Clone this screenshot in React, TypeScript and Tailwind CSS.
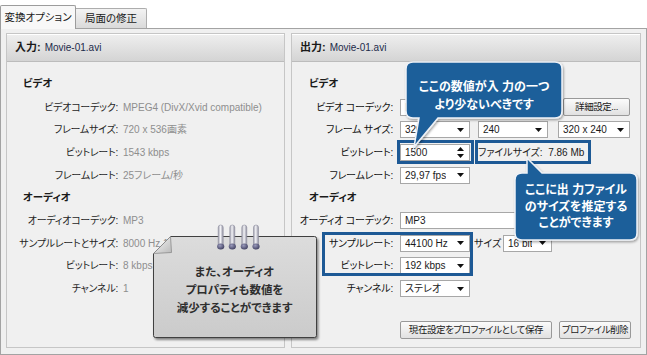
import React from "react";

const F = "font-['Liberation_Sans','Noto_Sans_CJK_JP',sans-serif] [font-feature-settings:'palt']";

function Arrow() {
  return (
    <svg width="7" height="4" viewBox="0 0 7 4" className="shrink-0">
      <path d="M0 0H7L3.5 4Z" fill="#111" />
    </svg>
  );
}

function Drop({ w, text }: { w: string; text: string }) {
  return (
    <div className={`${w} h-[17px] shrink-0 bg-white border border-[#a7a7a7] flex items-center justify-between pl-[4px] pr-[5px] text-[#1a1a1a]`}>
      <span className="whitespace-nowrap overflow-hidden">{text}</span>
      <Arrow />
    </div>
  );
}

function Spin({ text }: { text: string }) {
  return (
    <div className="w-[70px] h-[17px] shrink-0 bg-white border border-[#a7a7a7] flex items-center justify-between pl-[4px] pr-[5px]">
      <span>{text}</span>
      <svg width="7" height="11" viewBox="0 0 7 11" className="shrink-0">
        <path d="M0 4H7L3.5 0Z" fill="#111" />
        <path d="M0 7H7L3.5 11Z" fill="#111" />
      </svg>
    </div>
  );
}

function LRow({ label, value }: { label: string; value: string }) {
  return (
    <div className="h-[22.7px] flex items-center whitespace-nowrap">
      <div className="w-[111px] shrink-0 text-right text-[#1f1f1f] tracking-[-0.25px]">{label}</div>
      <div className="ml-[5px] text-[#8e8e8e]">{value}</div>
    </div>
  );
}

function RRow({ label, children }: { label: string; children?: React.ReactNode }) {
  return (
    <div className="h-[22.7px] flex items-center whitespace-nowrap">
      <div className="w-[101px] shrink-0 text-right text-[#111] tracking-[-0.2px]">{label}</div>
      <div className="ml-[7px] flex items-center">{children}</div>
    </div>
  );
}

function Title({ text, pl }: { text: string; pl: string }) {
  return (
    <div className={`h-[22.7px] flex items-center font-bold text-[10.5px] ${pl}`}>{text}</div>
  );
}

function Header({ label }: { label: string }) {
  return (
    <div className="h-[28px] shrink-0 border-b border-[#bcbcbc] bg-gradient-to-b from-[#efefef] to-[#d4d4d4] shadow-[inset_0_1px_0_#ffffff] flex items-center pl-[8px] whitespace-nowrap">
      <span className="font-bold text-[11px]">{label}</span>
      <span className="ml-[4px] text-[10px] text-[#1c2b4a]">Movie-01.avi</span>
    </div>
  );
}

function Btn({ w, text }: { w: string; text: string }) {
  return (
    <div className={`${w} h-[18px] shrink-0 border border-[#999999] rounded-[2px] bg-gradient-to-b from-[#fbfbfb] to-[#e1e1e1] flex items-center justify-center whitespace-nowrap text-[9.5px] tracking-[-0.45px]`}>
      {text}
    </div>
  );
}

export default function App() {
  return (
    <div className={`relative w-[647px] h-[355px] bg-white overflow-hidden text-[10px] text-[#1a1a1a] ${F}`}>
      {/* tabs */}
      <div className="flex items-end h-[28px]">
        <div className="relative z-10 -mb-px h-[24px] w-[76px] border border-b-0 border-[#9c9c9c] bg-[#f8f8f8] flex items-center justify-center text-[10.5px] rounded-t-[2px]">
          変換オプション
        </div>
        <div className="h-[20px] w-[71px] border border-l-0 border-b-0 border-[#adadad] bg-gradient-to-b from-[#f3f3f3] to-[#dadada] flex items-center justify-center text-[10.5px] rounded-tr-[2px]">
          局面の修正
        </div>
      </div>

      {/* main body */}
      <div className="h-[327px] border border-[#a3a3a3] bg-[#f0f0f0] flex gap-[6px] px-[5px] pt-[4px]">
        {/* input panel */}
        <div className="w-[279px] h-[315px] border border-[#c6c6c6] flex flex-col bg-[#f0f0f0]">
          <Header label="入力:" />
          <div className="pt-[11px] flex flex-col">
            <Title text="ビデオ" pl="pl-[16px]" />
            <LRow label="ビデオコーデック:" value="MPEG4 (DivX/Xvid compatible)" />
            <LRow label="フレームサイズ:" value="720 x 536画素" />
            <LRow label="ビットレート:" value="1543 kbps" />
            <LRow label="フレームレート:" value="25フレーム/秒" />
            <Title text="オーディオ" pl="pl-[16px]" />
            <LRow label="オーディオコーデック:" value="MP3" />
            <LRow label="サンプルレートとサイズ:" value="8000 Hz 16 bit" />
            <LRow label="ビットレート:" value="8 kbps" />
            <LRow label="チャンネル:" value="1" />
          </div>
        </div>

        {/* output panel */}
        <div className="w-[350px] h-[315px] border border-[#c6c6c6] flex flex-col bg-[#f0f0f0]">
          <Header label="出力:" />
          <div className="pt-[11px] flex flex-col flex-1">
            <Title text="ビデオ" pl="pl-[17px]" />
            <RRow label="ビデオ コーデック:">
              <div className="w-[156px] h-[17px] bg-white border border-[#a7a7a7] flex items-center pl-[4px] overflow-hidden">M</div>
              <div className="ml-[7px]">
                <Btn w="w-[67px]" text="詳細設定..." />
              </div>
            </RRow>
            <RRow label="フレーム サイズ:">
              <Drop w="w-[70px]" text="320" />
              <div className="ml-[8px]">
                <Drop w="w-[70px]" text="240" />
              </div>
              <div className="ml-[10px]">
                <Drop w="w-[72px]" text="320 x 240" />
              </div>
            </RRow>
            <RRow label="ビットレート:">
              <Spin text="1500" />
              <span className="ml-[8px]">ファイルサイズ:&nbsp;&nbsp;7.86 Mb</span>
            </RRow>
            <RRow label="フレームレート:">
              <Drop w="w-[70px]" text="29,97 fps" />
            </RRow>
            <Title text="オーディオ" pl="pl-[17px]" />
            <RRow label="オーディオ コーデック:">
              <div className="w-[230px] h-[17px] bg-white border border-[#a7a7a7] flex items-center pl-[4px]">MP3</div>
            </RRow>
            <RRow label="サンプルレート:">
              <Drop w="w-[70px]" text="44100 Hz" />
              <span className="w-[33px] pl-[4px]">サイズ</span>
              <Drop w="w-[49px]" text="16 bit" />
            </RRow>
            <RRow label="ビットレート:">
              <Drop w="w-[70px]" text="192 kbps" />
            </RRow>
            <RRow label="チャンネル:">
              <Drop w="w-[70px]" text="ステレオ" />
            </RRow>
            <div className="mt-auto flex justify-end gap-[7px] pr-[9px] pb-[8px]">
              <Btn w="w-[152px]" text="現在設定をプロファイルとして保存" />
              <Btn w="w-[72px]" text="プロファイル削除" />
            </div>
          </div>
        </div>
      </div>

      {/* highlight boxes */}
      <div className="absolute left-[397px] top-[140px] w-[77px] h-[24px] border-[3px] border-[#1d5995]" />
      <div className="absolute left-[475px] top-[140px] w-[116px] h-[24px] border-[3px] border-[#1d5995]" />
      <div className="absolute left-[322px] top-[232px] w-[151px] h-[44px] border-[3px] border-[#1d5995]" />

      {/* bubble 1 */}
      <svg className="absolute left-[400px] top-[56px]" width="172" height="100" viewBox="0 0 172 100">
        <defs>
          <filter id="sh1" x="-10%" y="-10%" width="130%" height="130%">
            <feDropShadow dx="1" dy="1.5" stdDeviation="1.2" floodColor="#000" floodOpacity="0.35" />
          </filter>
        </defs>
        <path
          d="M13 6H155Q162 6 162 13V55Q162 62 155 62H38L14 91L19 62H13Q6 62 6 55V13Q6 6 13 6Z"
          fill="#1f5e9a"
          stroke="#eef2f7"
          strokeWidth="1.5"
          filter="url(#sh1)"
        />
      </svg>
      <div className="absolute left-[406px] top-[78px] w-[156px] text-center text-white font-bold text-[12px] leading-[18px] whitespace-nowrap">
        ここの数値が入 力の一つ
        <br />
        より少ないべきです
      </div>

      {/* bubble 2 */}
      <svg className="absolute left-[509px] top-[152px]" width="138" height="96" viewBox="0 0 138 96">
        <defs>
          <filter id="sh2" x="-10%" y="-10%" width="130%" height="130%">
            <feDropShadow dx="1" dy="1.5" stdDeviation="1.2" floodColor="#000" floodOpacity="0.35" />
          </filter>
        </defs>
        <path
          d="M13 21H18V6L33 21H121Q128 21 128 28V81Q128 88 121 88H13Q6 88 6 81V28Q6 21 13 21Z"
          fill="#1f5e9a"
          stroke="#eef2f7"
          strokeWidth="1.5"
          filter="url(#sh2)"
        />
      </svg>
      <div className="absolute left-[515px] top-[182px] w-[122px] text-center text-white font-bold text-[12px] leading-[16.5px] whitespace-nowrap">
        ここに出 力ファイル
        <br />
        のサイズを推定する
        <br />
        ことができます
      </div>

      {/* note */}
      <svg className="absolute left-[150px] top-[222px]" width="175" height="122" viewBox="0 0 175 122">
        <defs>
          <linearGradient id="ng" x1="0" y1="0" x2="0" y2="1">
            <stop offset="0" stopColor="#dcdcdc" />
            <stop offset="1" stopColor="#cbcbcb" />
          </linearGradient>
          <linearGradient id="fg" x1="0" y1="0" x2="1" y2="1">
            <stop offset="0" stopColor="#fafafa" />
            <stop offset="1" stopColor="#b9b9b9" />
          </linearGradient>
          <linearGradient id="rg" x1="0" y1="0" x2="1" y2="0">
            <stop offset="0" stopColor="#9a9aa8" />
            <stop offset="0.45" stopColor="#f4f4f8" />
            <stop offset="1" stopColor="#8c8c9c" />
          </linearGradient>
          <radialGradient id="dg" cx="0.4" cy="0.35" r="0.7">
            <stop offset="0" stopColor="#9a9abb" />
            <stop offset="1" stopColor="#3d3d5e" />
          </radialGradient>
          <filter id="ns" x="-10%" y="-10%" width="130%" height="130%">
            <feDropShadow dx="1.5" dy="2" stdDeviation="1.3" floodColor="#000" floodOpacity="0.45" />
          </filter>
        </defs>
        <path
          d="M20.5 14.5H164.5Q166.5 14.5 166.5 16.5V113.5Q166.5 115.5 164.5 115.5H5.5Q3.5 115.5 3.5 113.5V31.5Z"
          fill="url(#ng)"
          stroke="#3f3f3f"
          strokeWidth="1"
          filter="url(#ns)"
        />
        <path d="M3.5 31.5L20.5 14.5L21.5 30.5Z" fill="url(#fg)" stroke="#8a8a8a" strokeWidth="0.8" />
        {[70.7, 82.3, 94.3, 106].map((x) => (
          <g key={x}>
            <rect x={x - 2.5} y={3} width={5} height={22} rx={2.5} fill="url(#rg)" stroke="#8f8fa0" strokeWidth="0.6" />
            <ellipse cx={x} cy={24.5} rx={3.6} ry={3} fill="url(#dg)" />
          </g>
        ))}
      </svg>
      <div className="absolute left-[153px] top-[263px] w-[163px] text-center text-[#2e2e2e] font-bold text-[11.5px] leading-[18px] whitespace-nowrap">
        また、オーディオ
        <br />
        プロパティも数値を
        <br />
        減少することができます
      </div>
    </div>
  );
}
